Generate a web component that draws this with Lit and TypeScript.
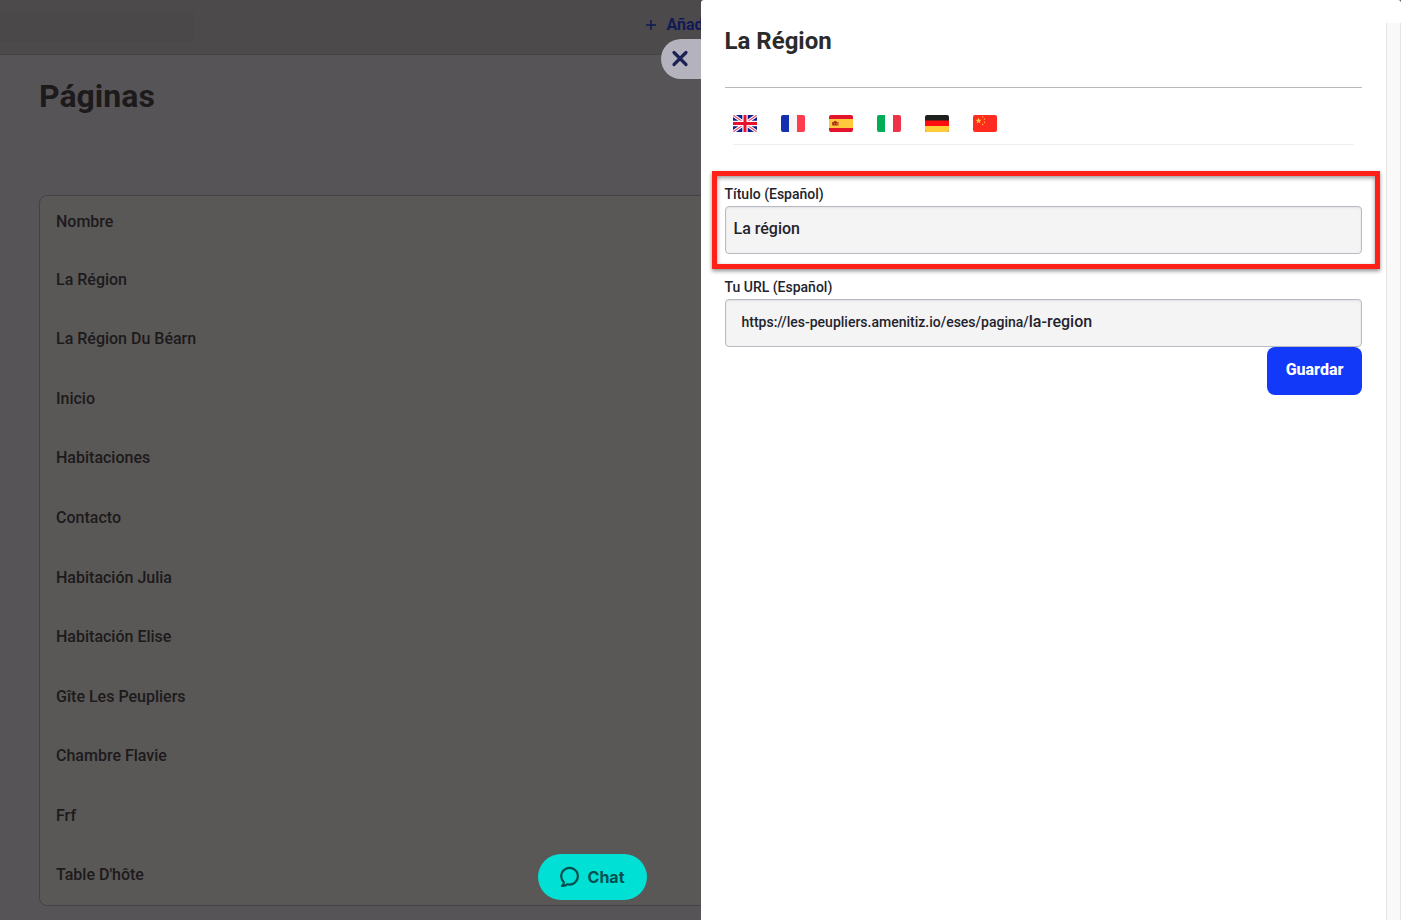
import { LitElement, html, css, svg } from "lit";
import { customElement, property, state } from "lit/decorators.js";

const PAGES = [
  "La Région",
  "La Région Du Béarn",
  "Inicio",
  "Habitaciones",
  "Contacto",
  "Habitación Julia",
  "Habitación Elise",
  "Gîte Les Peupliers",
  "Chambre Flavie",
  "Frf",
  "Table D'hôte",
];

const FLAGS = [
  {
    name: "English",
    art: svg`
      <rect width="24" height="17" fill="#0f1c8f" />
      <path d="M0 0 24 17M24 0 0 17" stroke="#fff" stroke-width="3.4" />
      <path d="M0 0 24 17M24 0 0 17" stroke="#e8536a" stroke-width="1.2" />
      <path d="M12 0V17M0 8.5H24" stroke="#fff" stroke-width="5.4" />
      <path d="M12 0V17M0 8.5H24" stroke="#e8112d" stroke-width="3" />
    `,
  },
  {
    name: "Français",
    art: svg`
      <rect width="24" height="17" fill="#f6f6f6" />
      <rect width="8" height="17" fill="#1230b0" />
      <rect x="16" width="8" height="17" fill="#ff3b4e" />
    `,
  },
  {
    name: "Español",
    art: svg`
      <rect width="24" height="17" fill="#e1142c" />
      <rect y="4" width="24" height="9" fill="#ffc83c" />
      <path d="M3 7h1v3.500H3zM8.500 7h1v3.500h-1z" fill="#b4501e" />
      <path d="M4 7h1V6h2.500v1h1v3.500H4z" fill="#b02a1c" />
      <path d="M5 8.200h.6v1H5zM6.900 8.200h.6v1h-.6z" fill="#ffc83c" />
    `,
  },
  {
    name: "Italiano",
    art: svg`
      <rect width="24" height="17" fill="#fff" />
      <rect width="8" height="17" fill="#03ad57" />
      <rect x="16" width="8" height="17" fill="#ee3349" />
    `,
  },
  {
    name: "Deutsch",
    art: svg`
      <rect width="24" height="17" fill="#1c211e" />
      <rect y="5.500" width="24" height="6" fill="#ff0d10" />
      <rect y="11" width="24" height="6" fill="#ffcd38" />
    `,
  },
  {
    name: "中文",
    art: svg`
      <rect width="24" height="17" fill="#ff2b20" />
      <path d="M5.600 2.500l.8 2.200 2.300.1-1.800 1.500.6 2.300-1.900-1.300-1.900 1.300.6-2.300L2.500 4.800l2.300-.1z" fill="#ffc83c" />
      <g fill="#ffc83c">
        <circle cx="9.700" cy="1.900" r=".7" /><circle cx="11.400" cy="4.100" r=".7" />
        <circle cx="11.400" cy="7.200" r=".7" /><circle cx="9.700" cy="9.500" r=".7" />
      </g>
    `,
  },
];

@customElement("pages-view")
class PagesView extends LitElement {
  static styles = css`
    :host {
      display: flex;
      flex-direction: column;
      min-height: 100vh;
      box-sizing: border-box;
      background: #575457;
      color: #1c1a1b;
      font-family: Roboto, sans-serif;
    }
    .bar {
      display: flex;
      align-items: center;
      justify-content: space-between;
      height: 54px;
      background: #4c4a4a;
      border-bottom: 1px solid #434145;
    }
    .search {
      width: 194px;
      height: 30px;
      box-sizing: border-box;
      border: 0;
      border-radius: 0 3px 3px 0;
      background: #4a4848;
    }
    .actions {
      flex: 0 0 54%;
      padding-bottom: 4px;
    }
    .add {
      display: flex;
      align-items: center;
      gap: 8px;
      padding: 0;
      border: 0;
      background: none;
      color: #111a56;
      font: 700 16px/24px Roboto, sans-serif;
    }
    .body {
      flex: 1;
      display: flex;
      flex-direction: column;
      padding: 19px 40px 14px 39px;
    }
    h1 {
      margin: 0 0 77px;
      font-size: 32px;
      line-height: 44px;
      font-weight: 700;
    }
    .pages {
      flex: 1;
      display: flex;
      flex-direction: column;
      border: 1px solid #444249;
      border-radius: 8px;
      background: #5a5757;
      font-size: 16px;
      line-height: 24px;
    }
    .pages tbody {
      flex: 1;
      display: flex;
      flex-direction: column;
    }
    .pages tr {
      display: flex;
      align-items: center;
      padding: 0 16px;
    }
    .pages thead tr {
      height: 52px;
      padding-bottom: 2px;
    }
    .pages tbody tr {
      flex: 1;
    }
    .pages th,
    .pages td {
      padding: 0;
      font-weight: 500;
      text-align: left;
    }
  `;

  render() {
    return html`
      <header class="bar">
        <input class="search" type="search" aria-label="Buscar" />
        <div class="actions">
          <button class="add" type="button">
            <svg width="14" height="14" viewBox="0 0 14 14" fill="none" stroke="currentColor" stroke-width="1.500" aria-hidden="true">
              <path d="M7 2v10M2 7h10" />
            </svg>
            Añadir
          </button>
        </div>
      </header>
      <main class="body">
        <h1>Páginas</h1>
        <table class="pages">
          <thead>
            <tr><th scope="col">Nombre</th></tr>
          </thead>
          <tbody>
            ${PAGES.map((name) => html`<tr><td>${name}</td></tr>`)}
          </tbody>
        </table>
      </main>
    `;
  }
}

@customElement("page-drawer")
class PageDrawer extends LitElement {
  @property() heading = "";
  @state() private slug = "la-region";

  static styles = css`
    :host {
      display: block;
      box-sizing: border-box;
      background: #fff;
      border-radius: 3px 3px 0 0;
      color: #23232d;
      font-family: Roboto, sans-serif;
    }
    .close {
      position: absolute;
      top: 39px;
      right: 100%;
      display: flex;
      align-items: center;
      width: 40px;
      height: 40px;
      padding: 0 0 2px 10px;
      border: 0;
      border-radius: 20px 0 0 20px;
      background: #b4b3bd;
      color: #1c2156;
    }
    .track {
      position: absolute;
      top: 23px;
      right: 0;
      bottom: 0;
      width: 15px;
      box-sizing: border-box;
      border: solid #e4e4e4;
      border-width: 0 1px;
      background: #f9f9f9;
    }
    .content {
      padding: 25px 39px 24px 24px;
    }
    h2 {
      margin: 0;
      padding-bottom: 30px;
      border-bottom: 1px solid #b9b9b9;
      color: #2b2b2b;
      font-size: 24px;
      line-height: 32px;
      font-weight: 700;
    }
    .languages {
      display: flex;
      gap: 24px;
      margin: 0 8px 39px;
      padding: 27px 0 12px;
      border-bottom: 1px solid #efefef;
    }
    .flag {
      display: block;
      width: 24px;
      height: 17px;
      padding: 0;
      border: 0;
      border-radius: 2px;
      overflow: hidden;
      background: none;
    }
    .flag svg {
      display: block;
    }
    .field {
      position: relative;
      display: flex;
      flex-direction: column;
      gap: 2px;
    }
    .field + .field {
      margin-top: 23px;
    }
    .field label {
      font-size: 14px;
      line-height: 20px;
      font-weight: 500;
    }
    .marked::after {
      content: "";
      position: absolute;
      inset: -13px -18px -15px -13px;
      border: 5px solid #ff2018;
      box-shadow: 0 2px 4px rgba(0, 0, 0, 0.45), inset 0 2px 4px rgba(0, 0, 0, 0.4);
      pointer-events: none;
    }
    .box {
      display: flex;
      align-items: center;
      height: 48px;
      box-sizing: border-box;
      border: 1px solid #b9b9c3;
      border-radius: 4px;
      background: #f4f4f4;
      box-shadow: inset 0 1px 2px rgba(0, 0, 0, 0.08);
      padding: 0 8px 2px;
    }
    .url {
      padding-left: 16px;
    }
    .prefix {
      font-size: 14px;
      line-height: 20px;
      font-weight: 500;
      white-space: nowrap;
    }
    .box input {
      flex: 1;
      min-width: 0;
      padding: 0;
      border: 0;
      outline: 0;
      background: none;
      color: inherit;
      font: 500 16px/24px Roboto, sans-serif;
    }
    .save {
      display: block;
      min-width: 95px;
      height: 48px;
      margin-left: auto;
      padding: 0 16px 2px;
      border: 0;
      border-radius: 8px;
      background: #1238f8;
      color: #fff;
      font: 800 16px/24px Roboto, sans-serif;
    }
  `;

  render() {
    return html`
      <button class="close" type="button" aria-label="Cerrar">
        <svg width="18" height="18" viewBox="0 0 18 18" fill="none" stroke="currentColor" stroke-width="3.200" stroke-linecap="round" aria-hidden="true">
          <path d="M3 3.500 15 15.500M15 3.500 3 15.500" />
        </svg>
      </button>
      <div class="content">
        <h2>${this.heading}</h2>
        <nav class="languages">
          ${FLAGS.map(
            (flag) => html`
              <button class="flag" type="button" aria-label=${flag.name}>
                <svg width="24" height="17" viewBox="0 0 24 17" aria-hidden="true">${flag.art}</svg>
              </button>
            `,
          )}
        </nav>
        <form @submit=${(e: Event) => e.preventDefault()}>
          <div class="field marked">
            <label for="title">Título (Español)</label>
            <div class="box"><input id="title" type="text" value="La région" /></div>
          </div>
          <div class="field">
            <label for="slug">Tu URL (Español)</label>
            <div class="box url">
              <span class="prefix">https://les-peupliers.amenitiz.io/eses/pagina/</span>
              <input id="slug" type="text" .value=${this.slug} />
            </div>
          </div>
          <button class="save" type="submit">Guardar</button>
        </form>
      </div>
      <div class="track"></div>
    `;
  }
}

@customElement("app-root")
class AppRoot extends LitElement {
  static styles = css`
    :host {
      display: block;
      position: relative;
      min-height: 100vh;
    }
    .drawer {
      position: fixed;
      top: 0;
      right: 0;
      bottom: 0;
      width: 50%;
    }
    .chat {
      position: fixed;
      right: calc(50% + 54px);
      bottom: 20px;
      display: flex;
      align-items: center;
      gap: 8px;
      height: 46px;
      padding: 0 22px;
      border: 0;
      border-radius: 23px;
      background: #00e0d5;
      color: #05504f;
      font: 700 16px/24px Inter, sans-serif;
    }
  `;

  render() {
    return html`
      <pages-view></pages-view>
      <page-drawer class="drawer" heading="La Région"></page-drawer>
      <button class="chat" type="button">
        <svg width="20" height="22" viewBox="0 0 20 22" fill="none" stroke="currentColor" stroke-width="2.200" stroke-linecap="round" stroke-linejoin="round" aria-hidden="true">
          <path d="M3.800 16.200A8.300 8.300 0 1 1 7.300 18.200C5.800 19.600 4 20.100 2 19.800 3.400 18.800 4 17.600 3.800 16.200Z" />
        </svg>
        Chat
      </button>
    `;
  }
}
